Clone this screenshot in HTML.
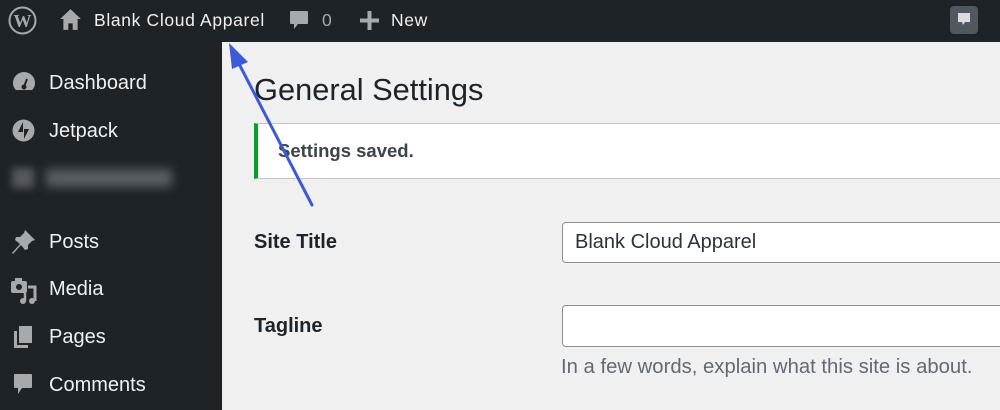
<!DOCTYPE html>
<html><head><meta charset="utf-8"><style>
*{margin:0;padding:0;box-sizing:border-box}
body{width:1000px;height:410px;overflow:hidden;background:#f0f0f1;font-family:"Liberation Sans",sans-serif;position:relative}
.top{position:absolute;left:0;top:0;width:1000px;height:42px;background:#1d2327}
.side{position:absolute;left:0;top:42px;width:222px;height:368px;background:#1d2327}
.t{position:absolute;white-space:nowrap}
.top .t{color:#f0f0f1;font-size:17.5px;letter-spacing:0.65px;top:10px}
.side .t{color:#f0f0f1;font-size:20px;left:49px}
.ic{position:absolute}
</style></head><body>
<div class="top">
<svg class="ic" style="left:8px;top:6px" width="29" height="29" viewBox="0 0 29 29"><circle cx="14.5" cy="14.5" r="13" fill="none" stroke="#a7aaad" stroke-width="2"/><text x="14.5" y="21" text-anchor="middle" font-family="Liberation Serif" font-size="18" font-weight="bold" fill="#a7aaad">W</text></svg>
<svg class="ic" style="left:59px;top:8px" width="23" height="23" viewBox="0 0 21 21"><path d="M10.5 1 L20 10 L17 10 L17 20 L12.5 20 L12.5 14 L8.5 14 L8.5 20 L4 20 L4 10 L1 10 Z" fill="#a7aaad"/></svg>
<div class="t" style="left:94px">Blank Cloud Apparel</div>
<svg class="ic" style="left:289px;top:10px" width="20" height="22" viewBox="0 0 20 22"><path d="M2 1 H18 Q19 1 19 2 V13 Q19 14 18 14 H9 L5 19 V14 H2 Q1 14 1 13 V2 Q1 1 2 1Z" fill="#a7aaad"/></svg>
<div class="t" style="left:322px;color:#a7aaad">0</div>
<svg class="ic" style="left:360px;top:11px" width="19" height="19" viewBox="0 0 19 19"><path d="M7.5 0h4v7.5H19v4h-7.5V19h-4v-7.5H0v-4h7.5z" fill="#a7aaad"/></svg>
<div class="t" style="left:391px">New</div>
<div class="ic" style="left:950px;top:6px;width:28px;height:28px;background:#50575e;border-radius:4px"></div>
<svg class="ic" style="left:957px;top:12px" width="14" height="16" viewBox="0 0 14 16"><path d="M1 1H13V10H8L6 13L5 10H1Z" fill="#dcdcde"/></svg>
</div>
<div class="side">
<svg class="ic" style="left:12px;top:29px" width="24" height="22" viewBox="0 0 24 22"><path d="M12 1A11 11 0 0 0 1 12c0 3 1 5 3 7h16c2-2 3-4 3-7A11 11 0 0 0 12 1z" fill="#a7aaad"/><path d="M12 16 L15 8" stroke="#1d2327" stroke-width="2"/><circle cx="12" cy="16" r="2.5" fill="#1d2327"/></svg>
<div class="t" style="top:30px">Dashboard</div>
<svg class="ic" style="left:12px;top:77px" width="23" height="23" viewBox="0 0 23 23"><circle cx="11.5" cy="11.5" r="11" fill="#a7aaad"/><path d="M11 3V13H6Z M12 20V10H17Z" fill="#1d2327"/></svg>
<div class="t" style="top:78px">Jetpack</div>
<div class="ic" style="left:12px;top:126px;width:22px;height:20px;background:#55595e;filter:blur(4px)"></div>
<div class="ic" style="left:46px;top:127px;width:126px;height:18px;background:#5a5e63;filter:blur(5px)"></div>
<svg class="ic" style="left:11px;top:187px" width="25" height="26" viewBox="0 0 25 26"><path d="M14 1 L24 11 L21 12 L17 16 L17 20 L14 21 L10 16 L2 25 L1 24 L9 15 L4 11 L5 8 L9 8 L13 4Z" fill="#a7aaad"/></svg>
<div class="t" style="top:189px">Posts</div>
<svg class="ic" style="left:10px;top:235px" width="27" height="28" viewBox="0 0 27 28"><rect x="1" y="4" width="16" height="12" rx="2" fill="#a7aaad"/><rect x="5" y="1" width="7" height="4" fill="#a7aaad"/><circle cx="9" cy="10" r="3" fill="#1d2327"/><path d="M18 10h7v14" stroke="#a7aaad" stroke-width="3" fill="none"/><circle cx="22" cy="24" r="3" fill="#a7aaad"/><circle cx="13" cy="24" r="3" fill="#a7aaad"/><path d="M15 24V16" stroke="#a7aaad" stroke-width="2.5"/></svg>
<div class="t" style="top:236px">Media</div>
<svg class="ic" style="left:13px;top:283px" width="20" height="24" viewBox="0 0 20 24"><rect x="6" y="1" width="13" height="17" fill="#a7aaad"/><path d="M1 6H4V20H15V23H1Z" fill="#a7aaad"/></svg>
<div class="t" style="top:284px">Pages</div>
<svg class="ic" style="left:13px;top:331px" width="20" height="23" viewBox="0 0 20 23"><path d="M2 1H18Q19 1 19 2V14Q19 15 18 15H9L5 21V15H2Q1 15 1 14V2Q1 1 2 1Z" fill="#a7aaad"/></svg>
<div class="t" style="top:332px">Comments</div>
</div>
<div class="t" style="left:254px;top:72px;font-size:30.8px;color:#1d2327">General Settings</div>
<div class="ic" style="left:254px;top:123px;width:760px;height:56px;background:#fff;border:1px solid #c3c4c7;border-left:4px solid #00a32a"></div>
<div class="t" style="left:278px;top:140px;font-size:18.5px;font-weight:bold;color:#3c434a">Settings saved.</div>
<div class="t" style="left:254px;top:231px;font-size:20px;font-weight:bold;color:#1d2327">Site Title</div>
<div class="ic" style="left:562px;top:222px;width:450px;height:41px;background:#fff;border:1px solid #8c8f94;border-radius:4px"></div>
<div class="t" style="left:575px;top:231px;font-size:20px;color:#2c3338">Blank Cloud Apparel</div>
<div class="t" style="left:254px;top:315px;font-size:20px;font-weight:bold;color:#1d2327">Tagline</div>
<div class="ic" style="left:562px;top:305px;width:450px;height:42px;background:#fff;border:1px solid #8c8f94;border-radius:4px"></div>
<div class="t" style="left:561px;top:356px;font-size:20.3px;color:#646970">In a few words, explain what this site is about.</div>
<svg class="ic" style="left:0;top:0" width="1000" height="410"><line x1="312" y1="205" x2="236" y2="58" stroke="#3b5bd6" stroke-width="3" stroke-linecap="round"/><path d="M229 43 L248 62 L232 69 Z" fill="#3b5bd6"/></svg>
</body></html>
